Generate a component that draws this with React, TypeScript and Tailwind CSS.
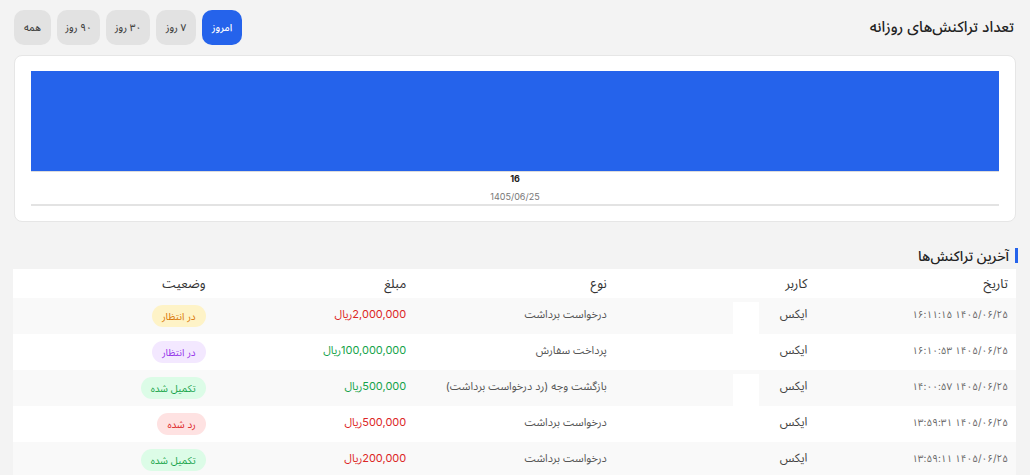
const ranges = [
  { label: "امروز", w: "w-[40px]" },
  { label: "۷ روز", w: "w-[40px]" },
  { label: "۳۰ روز", w: "w-[44px]" },
  { label: "۹۰ روز", w: "w-[43px]" },
  { label: "همه", w: "w-[37px]" },
];

type Status = "pending" | "pendingPurple" | "done" | "rejected";

const rows: {
  date: string;
  user: string;
  type: string;
  amount: string;
  positive: boolean;
  status: Status;
}[] = [
  { date: "۱۴۰۵/۰۶/۲۵ ۱۶:۱۱:۱۵", user: "ایکس", type: "درخواست برداشت", amount: "2,000,000", positive: false, status: "pending" },
  { date: "۱۴۰۵/۰۶/۲۵ ۱۶:۱۰:۵۳", user: "ایکس", type: "پرداخت سفارش", amount: "100,000,000", positive: true, status: "pendingPurple" },
  { date: "۱۴۰۵/۰۶/۲۵ ۱۴:۰۰:۵۷", user: "ایکس", type: "بازگشت وجه (رد درخواست برداشت)", amount: "500,000", positive: true, status: "done" },
  { date: "۱۴۰۵/۰۶/۲۵ ۱۳:۵۹:۳۱", user: "ایکس", type: "درخواست برداشت", amount: "500,000", positive: false, status: "rejected" },
  { date: "۱۴۰۵/۰۶/۲۵ ۱۳:۵۹:۱۱", user: "ایکس", type: "درخواست برداشت", amount: "200,000", positive: false, status: "done" },
];

const badge: Record<Status, { label: string; cls: string }> = {
  pending: { label: "در انتظار", cls: "bg-[#fef3c7] text-[#d97706]" },
  pendingPurple: { label: "در انتظار", cls: "bg-[#f3e8ff] text-[#9333ea]" },
  done: { label: "تکمیل شده", cls: "bg-[#dcfce7] text-[#16a34a]" },
  rejected: { label: "رد شده", cls: "bg-[#fee2e2] text-[#dc2626]" },
};

export default function App() {
  return (
    <div
      dir="rtl"
      className="min-h-[475px] bg-[#f3f3f3] px-[14px] pt-[10px] text-[#333]"
      style={{
        fontFamily:
          'Inter, "Noto Sans Arabic", "Noto Naskh Arabic", "DejaVu Sans", sans-serif',
      }}
    >
      <div className="flex items-center justify-between h-[35px]">
        <h2 className="text-[15px] font-medium text-[#222] pr-[2px]">
          تعداد تراکنش‌های روزانه
        </h2>
        <div className="flex gap-[6px] h-full">
          {ranges.map((r, i) => (
            <button
              key={r.label}
              className={`h-full ${r.w} rounded-[10px] text-[10px] font-medium ${
                i === 0
                  ? "bg-[#2563eb] text-white"
                  : "bg-[#e2e2e2] text-[#444]"
              }`}
            >
              {r.label}
            </button>
          ))}
        </div>
      </div>

      <div className="mt-[10px] h-[167px] rounded-[8px] border border-[#e6e6e6] bg-white pt-[15px] px-[16px]">
        <div className="flex flex-col" dir="ltr">
          <div className="h-[100px] bg-[#2563eb]" />
          <div className="border-t border-[#dcdcdc]" />
          <div className="text-center text-[9px] font-bold text-[#222] leading-none mt-[2px]">
            16
          </div>
          <div className="text-center text-[9px] text-[#777] leading-none mt-[9px]">
            1405/06/25
          </div>
          <div className="mt-[3px] h-[2px] bg-[#e3e3e3]" />
        </div>
      </div>

      <div className="mt-[26px] flex items-center gap-[6px] h-[15px]">
        <span className="w-[3px] h-[15px] bg-[#2563eb] mr-[-2px]" />
        <h3 className="text-[14px] font-medium text-[#222]">آخرین تراکنش‌ها</h3>
      </div>

      <table className="mt-[6px] w-[1003px] table-fixed border-collapse text-[12px]">
        <thead>
          <tr className="h-[29px] bg-white text-[13px] text-[#333]">
            <th className="text-right font-normal pr-[8px]">تاریخ</th>
            <th className="text-right font-normal pr-[8px]">کاربر</th>
            <th className="text-right font-normal pr-[8px]">نوع</th>
            <th className="text-right font-normal pr-[8px]">مبلغ</th>
            <th className="text-right font-normal pr-[8px]">وضعیت</th>
          </tr>
        </thead>
        <tbody>
          {rows.map((row, i) => (
            <tr
              key={i}
              className={`h-[36px] ${i % 2 === 0 ? "bg-[#f9f9f9]" : "bg-white"}`}
            >
              <td className="pr-[8px] pb-[4px] text-[#666] text-[10px]">{row.date}</td>
              <td className="relative pr-[8px] pb-[4px] text-[#444]">
                {row.user}
                {(i === 0 || i === 2) && (
                  <span className="absolute top-[4px] bottom-0 left-[118px] w-[26px] bg-white" />
                )}
              </td>
              <td className="pr-[8px] pb-[4px] text-[11px] text-[#555]">{row.type}</td>
              <td
                className={`pr-[8px] pb-[4px] text-[11px] ${
                  row.positive ? "text-[#16a34a]" : "text-[#dc2626]"
                }`}
              >
                {row.amount}ریال
              </td>
              <td className="pr-[8px]">
                <span
                  className={`inline-flex h-[22px] items-center rounded-full px-[10px] text-[10px] ${badge[row.status].cls}`}
                >
                  {badge[row.status].label}
                </span>
              </td>
            </tr>
          ))}
        </tbody>
      </table>
    </div>
  );
}
